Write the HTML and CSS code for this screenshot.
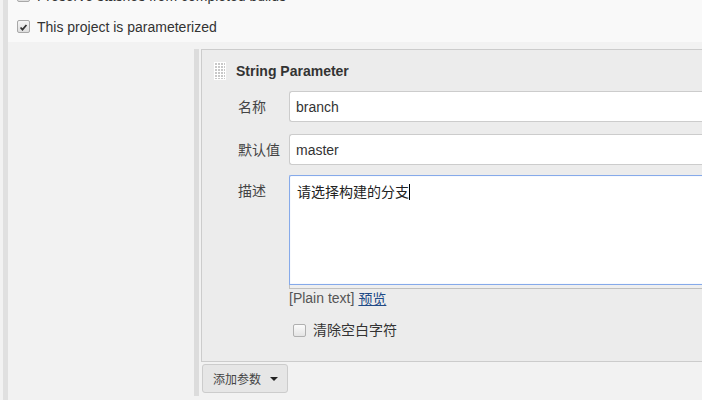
FILE: index.html
```html
<!DOCTYPE html>
<html lang="zh-CN">
<head>
<meta charset="utf-8">
<title>String Parameter</title>
<link rel="stylesheet" href="styles.css">
</head>
<body>
<div class="page">
  <div class="leftbar"></div>
  <div class="main">
    <div class="top">
      <div class="opt-row">
        <span class="cb"></span>
        <span class="opt-text">Preserve stashes from completed builds</span>
      </div>
      <div class="opt-row">
        <span class="cb checked">
          <svg viewBox="0 0 13 13" width="13" height="13"><path d="M3 6.5 L5.3 9 L10 3.5" fill="none" stroke="#333" stroke-width="2"/></svg>
        </span>
        <span class="opt-text">This project is parameterized</span>
      </div>
    </div>
    <div class="params">
      <div class="wrap">
        <div class="box">
          <div class="head">
            <span class="grip"></span>
            <span class="title">String Parameter</span>
          </div>
          <div class="form">
            <div class="row r1">
              <div class="label">名称</div>
              <input class="field" type="text" value="branch">
            </div>
            <div class="row r2">
              <div class="label">默认值</div>
              <input class="field" type="text" value="master">
            </div>
            <div class="row">
              <div class="label">描述</div>
              <div class="col">
                <div class="textarea">请选择构建的分支<span class="caret"></span></div>
                <div class="grippie"></div>
                <div class="hint">[Plain text] <a class="link" href="#">预览</a></div>
                <div class="trim">
                  <span class="cb2"></span>
                  <span>清除空白字符</span>
                </div>
              </div>
            </div>
          </div>
        </div>
        <button class="add-btn" type="button">添加参数 <span class="tri"></span></button>
      </div>
    </div>
  </div>
</div>
</body>
</html>
```

FILE: styles.css
```css
html, body {
  margin: 0;
  padding: 0;
  overflow: hidden;
}
body {
  background: #f2f2f2;
  font-family: "Liberation Sans", Arial, "Noto Sans CJK SC", sans-serif;
  font-size: 14px;
  color: #333;
  width: 702px;
  height: 400px;
}
.page {
  display: flex;
  height: 400px;
}
.leftbar {
  width: 5px;
  margin-left: 3px;
  background: #e0e0e0;
  flex: none;
}
.main {
  flex: 1;
  min-width: 0;
}
.top {
  background: #f9f9f9;
  margin-top: -20px;
  padding-left: 9px;
  height: 62px;
  overflow: hidden;
}
.opt-row {
  height: 31px;
  display: flex;
  align-items: center;
  gap: 7px;
}
.opt-text {
  color: #333;
  line-height: 16px;
}
.cb {
  width: 11px;
  height: 11px;
  border: 1px solid #a8a8a8;
  border-radius: 2px;
  background: linear-gradient(#f6f6f6, #dedede);
  display: inline-flex;
  flex: none;
}
.cb svg {
  display: block;
}
.params {
  padding: 7px 0 0 186px;
}
.wrap {
  border-left: 5px solid #dcdcdc;
  padding: 0 0 3px 2px;
}
.box {
  background: #ececec;
  border: 1px solid #cccccc;
  border-right: none;
  margin-right: -30px;
  padding-bottom: 23px;
}
.head {
  display: flex;
  align-items: center;
  gap: 10px;
  padding: 12px 0 0 12px;
  height: 18px;
}
.grip {
  width: 12px;
  height: 18px;
  background-color: #c8c8c8;
  background-image: linear-gradient(to right, #fff 1px, transparent 1px), linear-gradient(to bottom, #fff 1px, transparent 1px);
  background-size: 3px 3px;
  border-right: 1px solid #fff;
  border-bottom: 1px solid #fff;
  box-sizing: border-box;
}
.title {
  font-weight: bold;
  font-size: 14px;
  color: #333;
}
.form {
  margin-top: 11px;
  padding-left: 36px;
}
.row {
  display: grid;
  grid-template-columns: 51px 1fr;
}
.r1 { margin-bottom: 12px; }
.r2 { margin-bottom: 10px; }
.label {
  line-height: 31px;
  height: 31px;
  color: #444;
  font-family: "Noto Sans CJK SC", sans-serif;
  font-size: 14px;
}
.field {
  box-sizing: border-box;
  height: 31px;
  width: 100%;
  border: 1px solid #cccccc;
  border-radius: 3px 0 0 3px;
  border-right: none;
  background: #fff;
  padding: 0 6px;
  font-family: "Liberation Sans", Arial, sans-serif;
  font-size: 14px;
  color: #333;
  margin: 0;
  outline: none;
}
.col {
  min-width: 0;
}
.textarea {
  box-sizing: border-box;
  height: 110px;
  border: 1px solid #86aaea;
  border-right: none;
  border-radius: 2px 0 0 0;
  box-shadow: inset 0 0 1px #b7cdf5;
  background: #fff;
  padding: 4px 7px;
  line-height: 22px;
  font-family: "Noto Sans CJK SC", sans-serif;
  font-size: 14px;
  color: #222;
}
.caret {
  display: inline-block;
  width: 1px;
  height: 16px;
  background: #000;
  vertical-align: -3px;
}
.grippie {
  height: 3px;
  background: #efefef;
  border-left: 1px solid #c0c0c0;
  border-bottom: 1px solid #c0c0c0;
}
.hint {
  height: 18px;
  line-height: 18px;
  color: #555;
  margin-top: 0;
  display: flex;
  align-items: center;
  gap: 4px;
}
.link {
  color: #204a87;
  text-decoration: underline;
  font-family: "Noto Sans CJK SC", sans-serif;
  line-height: 18px;
}
.trim {
  margin-top: 13px;
  height: 18px;
  display: flex;
  align-items: center;
  gap: 7px;
  padding-left: 4px;
  color: #333;
  font-family: "Noto Sans CJK SC", sans-serif;
  line-height: 18px;
}
.cb2 {
  width: 11px;
  height: 11px;
  border: 1px solid #b0b0b0;
  border-radius: 2px;
  background: linear-gradient(#fbfbfb, #e4e4e4);
  margin-top: 3px;
  flex: none;
}
.add-btn {
  margin: 2px 0 0 1px;
  height: 29px;
  width: 86px;
  box-sizing: border-box;
  border: 1px solid #cccccc;
  border-radius: 3px;
  background: #e6e6e6;
  font-family: "Noto Sans CJK SC", sans-serif;
  font-size: 12px;
  color: #444;
  display: flex;
  align-items: center;
  padding: 0 0 0 10px;
  gap: 9px;
}
.tri {
  width: 0;
  height: 0;
  border-left: 4px solid transparent;
  border-right: 4px solid transparent;
  border-top: 4px solid #222;
}
```
